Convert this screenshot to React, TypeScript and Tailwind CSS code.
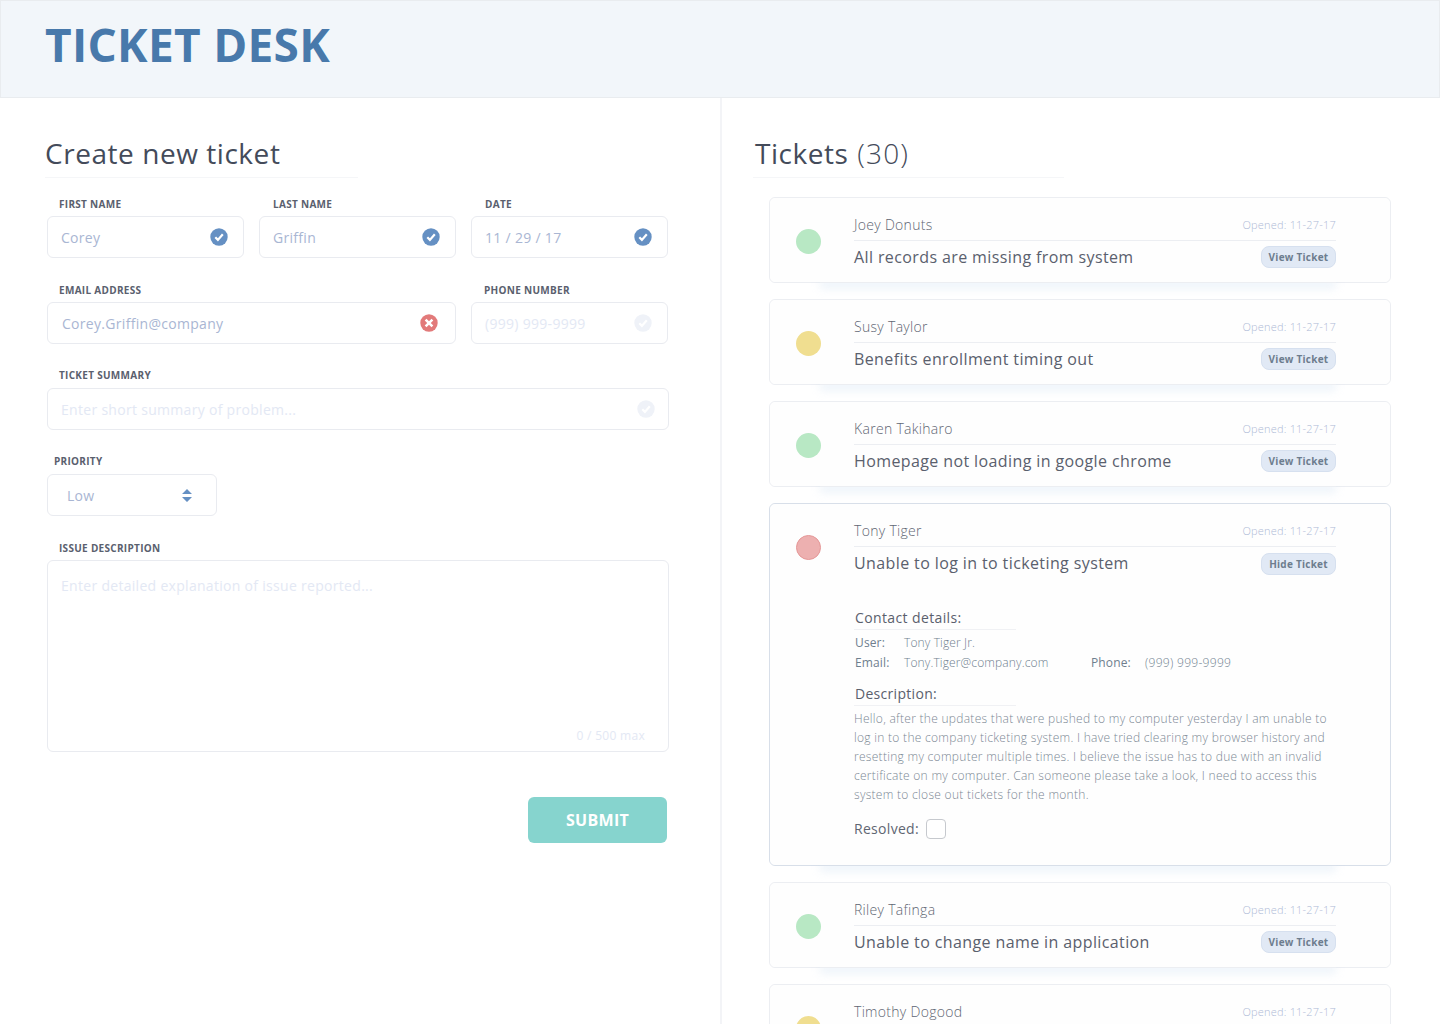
import React from "react";

function CheckIcon({ tone }: { tone: "on" | "off" }) {
  return (
    <svg width="18" height="18" viewBox="0 0 18 18" className="shrink-0">
      <circle cx="9" cy="9" r="8.7" fill={tone === "on" ? "#6590c3" : "#eff2f8"} />
      <path d="M5.3 9.3 L7.9 11.9 L12.8 6.3" fill="none" stroke="#fff" strokeWidth="2.2" />
    </svg>
  );
}

function ErrorIcon() {
  return (
    <svg width="18" height="18" viewBox="0 0 18 18" className="shrink-0">
      <circle cx="9" cy="9" r="8.7" fill="#e27a7a" />
      <path d="M5.6 5.6 L12.4 12.4 M12.4 5.6 L5.6 12.4" fill="none" stroke="#fff" strokeWidth="2.5" />
    </svg>
  );
}

function SortIcon() {
  return (
    <svg width="10" height="13" viewBox="0 0 10 13">
      <path d="M5 0 L10 5 L0 5 Z M0 8 L10 8 L5 13 Z" fill="#6590c3" />
    </svg>
  );
}

function Label({
  children,
  className = "",
  gap = "mb-[5px]",
}: {
  children: React.ReactNode;
  className?: string;
  gap?: string;
}) {
  return (
    <div className={`text-[10px] leading-[14px] font-bold uppercase tracking-[0.3px] text-[#5a606e] h-[14px] ${gap} ${className}`}>
      {children}
    </div>
  );
}

function Field({
  label,
  value,
  muted,
  icon,
  width,
  labelClass = "pl-3",
  labelGap,
  textClass = "pl-[13px]",
  iconClass = "pr-[15px]",
}: {
  label: string;
  value: string;
  muted?: boolean;
  icon: React.ReactNode;
  width: string;
  labelClass?: string;
  labelGap?: string;
  textClass?: string;
  iconClass?: string;
}) {
  return (
    <div className={width}>
      <Label className={labelClass} gap={labelGap}>
        {label}
      </Label>
      <div className={`h-[42px] flex items-center justify-between rounded-md border border-[#e9ebf0] bg-white ${textClass} ${iconClass}`}>
        <span className={`mt-[2px] text-sm tracking-[0.3px] ${muted ? "text-[#e3e8f4]" : "text-[#a9b6d3]"}`}>{value}</span>
        {icon}
      </div>
    </div>
  );
}

type Ticket = { name: string; title?: string; color: string };

const dotGreen = "bg-[#b8e8c4]";
const dotYellow = "bg-[#f0de90]";
const dotRed = "bg-[#edb0b0] border border-[#e59797]";

function TicketHead({ t, action, open }: { t: Ticket; action?: string; open?: boolean }) {
  return (
    <div className="flex">
      <div className="w-[84px] shrink-0 pl-[26px] pt-[31px]">
        <div className={`w-[25px] h-[25px] rounded-full ${t.color}`} />
      </div>
      <div className="w-[482px]">
        <div className="h-[43px] pt-[12px] flex items-center justify-between border-b border-[#eceef2]">
          <span className="text-sm font-light tracking-[0.3px] text-[#5f6673]">{t.name}</span>
          <span className="mt-[1px] text-[11px] font-light tracking-[0.2px] text-[#aebad6]">Opened: 11-27-17</span>
        </div>
        {t.title && action && (
          <div className={`flex items-center justify-between ${open ? "pt-[6px]" : "pt-[4px]"}`}>
            <span className={`text-base tracking-[0.39px] text-[#5a606d] ${open ? "-mt-[2px]" : ""}`}>{t.title}</span>
            <span className="h-[22px] w-[75px] rounded-lg border border-[#d6e0ef] bg-[#e1e9f5] text-[10px] font-bold tracking-[0.25px] text-[#6d7d8e] flex items-center justify-center">
              {action}
            </span>
          </div>
        )}
      </div>
    </div>
  );
}

function CardShell({ children, open }: { children: React.ReactNode; open?: boolean }) {
  return (
    <div className={`relative w-[622px] rounded-md border bg-white ${open ? "border-[#d8dfe9]" : "border-[#eceef2]"}`}>
      <div className="absolute left-[50px] right-[54px] -bottom-[1px] h-[10px] shadow-[0_6px_8px_rgba(195,217,238,0.28)]" />
      <div className="relative bg-[#fefefe] rounded-md">{children}</div>
    </div>
  );
}

function TicketCard({ t }: { t: Ticket }) {
  return (
    <CardShell>
      <div className="h-[84px]">
        <TicketHead t={t} action="View Ticket" />
      </div>
    </CardShell>
  );
}

function OpenCard({ t }: { t: Ticket }) {
  return (
    <CardShell open>
      <div className="h-[361px]">
        <TicketHead t={t} action="Hide Ticket" open />
        <div className="pl-[84px] w-[566px]">
          <div className="mt-[33px] w-[162px] h-[22px] border-b border-[#f0f1f4] pl-[1px] text-sm leading-[20px] text-[#5a606d] tracking-[0.38px]">
            Contact details:
          </div>
          <div className="mt-[3px] flex text-xs leading-[20px] tracking-[0.13px] pl-[1px]">
            <span className="w-[49px] text-[#6f7f8e]">User:</span>
            <span className="font-light text-[#6f7f8e]">Tony Tiger Jr.</span>
          </div>
          <div className="flex text-xs leading-[20px] tracking-[0.13px] pl-[1px]">
            <span className="w-[49px] text-[#6f7f8e]">Email:</span>
            <span className="w-[187px] font-light text-[#6f7f8e]">Tony.Tiger@company.com</span>
            <span className="w-[54px] text-[#6f7f8e]">Phone:</span>
            <span className="font-light tracking-[0.3px] text-[#6f7f8e]">(999) 999-9999</span>
          </div>
          <div className="mt-[11px] w-[162px] h-[22px] border-b border-[#f0f1f4] pl-[1px] text-sm leading-[20px] text-[#5a606d] tracking-[0.3px]">
            Description:
          </div>
          <p className="mt-[3px] text-xs leading-[19px] font-light tracking-[0.29px] text-[#7c8894] whitespace-nowrap">
            Hello, after the updates that were pushed to my computer yesterday I am unable to
            <br />
            log in to the company ticketing system. I have tried clearing my browser history and
            <br />
            resetting my computer multiple times. I believe the issue has to due with an invalid
            <br />
            certificate on my computer. Can someone please take a look, I need to access this
            <br />
            system to close out tickets for the month.
          </p>
          <div className="mt-[15px] flex items-center gap-[7px]">
            <span className="text-sm tracking-[0.3px] text-[#5f6673]">Resolved:</span>
            <span className="w-5 h-5 rounded border border-[#c6c9ce] bg-white" />
          </div>
        </div>
      </div>
    </CardShell>
  );
}

export default function App() {
  return (
    <div
      className="h-[1024px] overflow-hidden bg-white antialiased"
      style={{ fontFamily: '"Open Sans", "Noto Sans", sans-serif' }}
    >
      <header className="h-[98px] border border-[#e9ecef] bg-[#f2f6fa] pl-[44px] pt-[11px]">
        <h1 className="text-[46px] leading-[64px] font-bold tracking-[0.3px] text-[#4879ab]">TICKET DESK</h1>
      </header>

      <div className="flex">
        <section className="w-[722px] h-[926px] shrink-0 border-r-2 border-[#f3f4f7] pl-[45px]">
          <div className="pt-[35px] w-[313px] h-[80px] border-b border-[#f5f6f8]">
            <h2 className="text-[28px] leading-[40px] tracking-[0.55px] text-[#444b5a]">Create new ticket</h2>
          </div>

          <div className="pl-[2px] pt-[19px]">
            <div className="flex gap-[15px]">
              <Field width="w-[197px]" label="First name" value="Corey" icon={<CheckIcon tone="on" />} />
              <Field width="w-[197px]" label="Last name" value="Griffin" labelClass="pl-[14px]" icon={<CheckIcon tone="on" />} />
              <Field width="w-[197px]" label="Date" value="11 / 29 / 17" labelClass="pl-[14px]" icon={<CheckIcon tone="on" />} />
            </div>
            <div className="flex gap-[15px] mt-[25px]">
              <Field
                width="w-[409px]"
                label="Email address"
                value="Corey.Griffin@company"
                textClass="pl-[14px]"
                iconClass="pr-[17px]"
                icon={<ErrorIcon />}
              />
              <Field
                width="w-[197px]"
                label="Phone number"
                value="(999) 999-9999"
                muted
                labelClass="pl-[13px]"
                icon={<CheckIcon tone="off" />}
              />
            </div>
            <div className="mt-[24px]">
              <Field
                width="w-[622px]"
                label="Ticket summary"
                labelGap="mb-[6px]"
                value="Enter short summary of problem..."
                muted
                iconClass="pr-[13px]"
                icon={<CheckIcon tone="off" />}
              />
            </div>
            <div className="mt-[24px] w-[170px]">
              <Label className="pl-[7px]" gap="mb-[6px]">
                Priority
              </Label>
              <div className="h-[42px] flex items-center justify-between rounded-md border border-[#e9ebf0] pl-[19px] pr-[24px]">
                <span className="mt-[2px] text-sm tracking-[0.3px] text-[#a9b6d3]">Low</span>
                <SortIcon />
              </div>
            </div>
            <div className="mt-[25px] w-[622px]">
              <Label className="pl-3">Issue description</Label>
              <div className="h-[192px] flex flex-col justify-between rounded-md border border-[#e9ebf0] pt-[15px] pb-[7px] pl-[13px] pr-[23px]">
                <span className="text-sm tracking-[0.3px] text-[#e3e8f4]">Enter detailed explanation of issue reported...</span>
                <span className="self-end text-xs tracking-[0.3px] text-[#e3e8f4]">0 / 500 max</span>
              </div>
            </div>
            <div className="w-[620px] mt-[45px] flex justify-end">
              <button className="w-[139px] h-[46px] rounded-md bg-[#86d4ce] text-base font-bold tracking-[0.3px] text-white">
                SUBMIT
              </button>
            </div>
          </div>
        </section>

        <section className="flex-1 pl-[31px]">
          <div className="pt-[35px] w-[311px] h-[80px] border-b border-[#f5f6f8] pl-[2px]">
            <h2 className="text-[28px] leading-[40px] tracking-[0.55px] text-[#444b5a]">
              Tickets <span className="ml-[1px] font-light tracking-[1.1px]">(30)</span>
            </h2>
          </div>
          <div className="pl-[16px] pt-[19px] flex flex-col gap-4">
            <TicketCard t={{ name: "Joey Donuts", title: "All records are missing from system", color: dotGreen }} />
            <TicketCard t={{ name: "Susy Taylor", title: "Benefits enrollment timing out", color: dotYellow }} />
            <TicketCard t={{ name: "Karen Takiharo", title: "Homepage not loading in google chrome", color: dotGreen }} />
            <OpenCard t={{ name: "Tony Tiger", title: "Unable to log in to ticketing system", color: dotRed }} />
            <TicketCard t={{ name: "Riley Tafinga", title: "Unable to change name in application", color: dotGreen }} />
            <TicketCard t={{ name: "Timothy Dogood", color: dotYellow }} />
          </div>
        </section>
      </div>
    </div>
  );
}
